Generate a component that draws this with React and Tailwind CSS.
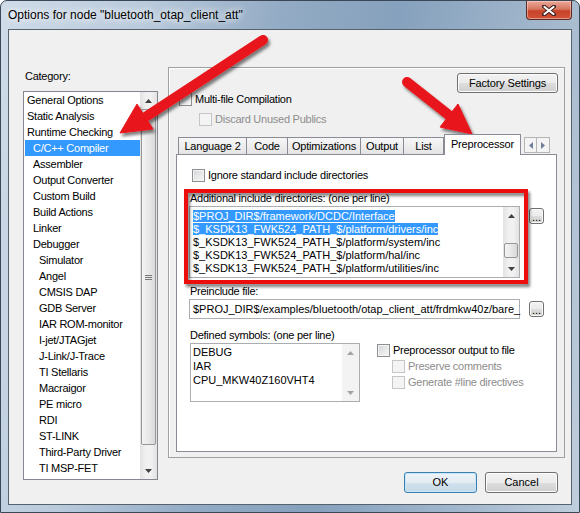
import React from "react";

const categories = [
  ["General Options", 0],
  ["Static Analysis", 0],
  ["Runtime Checking", 0],
  ["C/C++ Compiler", 1],
  ["Assembler", 1],
  ["Output Converter", 1],
  ["Custom Build", 1],
  ["Build Actions", 1],
  ["Linker", 1],
  ["Debugger", 1],
  ["Simulator", 2],
  ["Angel", 2],
  ["CMSIS DAP", 2],
  ["GDB Server", 2],
  ["IAR ROM-monitor", 2],
  ["I-jet/JTAGjet", 2],
  ["J-Link/J-Trace", 2],
  ["TI Stellaris", 2],
  ["Macraigor", 2],
  ["PE micro", 2],
  ["RDI", 2],
  ["ST-LINK", 2],
  ["Third-Party Driver", 2],
  ["TI MSP-FET", 2]
];

const indent = ["pl-[3px]", "pl-[9px]", "pl-[15px]"];

const tabs = [
  ["Language 2", "w-[69px]"],
  ["Code", "w-[42px]"],
  ["Optimizations", "w-[74px]"],
  ["Output", "w-[44px]"],
  ["List", "w-[41px]"]
];

const includes = [
  ["$PROJ_DIR$/framework/DCDC/Interface", true],
  ["$_KSDK13_FWK524_PATH_$/platform/drivers/inc", true],
  ["$_KSDK13_FWK524_PATH_$/platform/system/inc", false],
  ["$_KSDK13_FWK524_PATH_$/platform/hal/inc", false],
  ["$_KSDK13_FWK524_PATH_$/platform/utilities/inc", false]
];

const btn = "flex items-center justify-center rounded-[3px] border border-[#707070] bg-[linear-gradient(#f2f2f2_0%,#ebebeb_50%,#dddddd_51%,#cfcfcf_100%)] shadow-[inset_0_0_0_1px_#fcfcfc]";
const track = "bg-[linear-gradient(90deg,#e2e2e2,#f1f1f1_35%,#f1f1f1_65%,#e2e2e2)]";

function Arrow({ up, color = "#404040" }) {
  return (
    <svg width="7" height="4" viewBox="0 0 7 4">
      <path d={up ? "M0 4L3.5 0L7 4Z" : "M0 0L3.5 4L7 0Z"} fill={color} />
    </svg>
  );
}

function Check({ disabled }) {
  return (
    <span
      className={`block h-[13px] w-[13px] shrink-0 border ${
        disabled
          ? "border-[#c6c6c6] bg-[#f4f4f4]"
          : "border-[#8e8f8f] bg-[linear-gradient(135deg,#d3d6da,#f7f7f7)] shadow-[inset_0_0_0_1px_#f3f3f3]"
      }`}
    />
  );
}

function Thumb({ h, grip }) {
  return (
    <div className={`${h} mx-[1px] flex items-center justify-center rounded-[2px] border border-[#979797] bg-[linear-gradient(90deg,#f4f4f4,#e8e8e8_50%,#d9d9d9)]`}>
      {grip && (
        <div className="flex w-[7px] flex-col gap-[1px]">
          <span className="h-[1px] bg-[#777]" />
          <span className="h-[1px] bg-[#777]" />
          <span className="h-[1px] bg-[#777]" />
        </div>
      )}
    </div>
  );
}

function Dots() {
  return <div className={`${btn} ml-[9px] mt-[2px] h-[16px] w-[15px] !items-end pb-[2px] leading-[8px]`}>...</div>;
}

export default function App() {
  return (
    <div className="relative h-[513px] w-[580px] overflow-hidden font-['Liberation_Sans',Arial,sans-serif] text-[11px] text-black">
      <div className="flex h-full w-full flex-col rounded-t-[7px] border border-[#3b4756] bg-[linear-gradient(100deg,#cfdbe8_0%,#b9cadc_22%,#93abc4_42%,#86a1bd_60%,#a2b7cc_82%,#bfcedd_100%)] px-[7px]">
        {/* title bar */}
        <div className="flex h-[28px] items-start justify-between">
          <div className="pt-[7px] text-[12px] leading-[15px] [text-shadow:0_0_6px_#fff,0_0_10px_#fff]">
            Options for node "bluetooth_otap_client_att"
          </div>
          <div className="flex h-[19px] w-[46px] items-center justify-center rounded-b-[4px] border border-t-0 border-[#5d2b25] bg-[linear-gradient(#e9a99b_0%,#d7775f_45%,#c7432a_55%,#d0533a_100%)] shadow-[inset_0_0_0_1px_rgba(255,220,210,0.5)]">
            <svg width="14" height="11" viewBox="0 0 14 11">
              <path d="M2 1.5L12 9.5M12 1.5L2 9.5" stroke="#3a2220" strokeWidth="4" strokeLinecap="round" />
              <path d="M2.5 2L11.5 9M11.5 2L2.5 9" stroke="#ffffff" strokeWidth="2.2" strokeLinecap="round" />
            </svg>
          </div>
        </div>

        {/* client area */}
        <div className="flex h-[476px] w-[564px] border border-[#56636f] bg-[#f0f0f0] pl-[14px] pt-[37px]">
          {/* category column */}
          <div className="flex w-[135px] flex-col">
            <div className="h-[24px] pl-[2px] pt-[3px] leading-[13px] tracking-[-0.25px]">Category:</div>
            <div className="flex h-[389px] border border-[#828790] bg-white">
              <div className="flex-1">
                {categories.map(([name, lvl]) =>
                  name === "C/C++ Compiler" ? (
                    <div key={name} className="ml-[1px] h-[16px] bg-[#3399ff] pl-[8px] leading-[16px] tracking-[-0.25px] text-white">
                      {name}
                    </div>
                  ) : (
                    <div key={name} className={`h-[16px] leading-[16px] tracking-[-0.25px] ${indent[lvl]}`}>
                      {name}
                    </div>
                  )
                )}
              </div>
              <div className={`flex w-[17px] flex-col ${track}`}>
                <div className="flex h-[17px] items-center justify-center">
                  <Arrow up />
                </div>
                <Thumb h="h-[336px]" grip />
                <div className="h-[17px]" />
                <div className="flex h-[17px] items-center justify-center">
                  <Arrow />
                </div>
              </div>
            </div>
          </div>

          {/* right column: options panel + dialog buttons */}
          <div className="ml-[10px] flex w-[397px] flex-col">
            <div className="flex h-[391px] flex-col border border-[#a0a0a0] shadow-[inset_1px_1px_0_#fff]">
              <div className="flex justify-end pr-[6px] pt-[5px]">
                <div className={`${btn} h-[20px] w-[101px] tracking-[-0.15px]`}>Factory Settings</div>
              </div>
              <div className="flex h-[13px] items-center gap-[3px] pl-[10px]">
                <Check />
                <span className="tracking-[-0.25px]">Multi-file Compilation</span>
              </div>
              <div className="mt-[7px] flex h-[13px] items-center gap-[3px] pl-[30px] text-[#8d8d8d]">
                <Check disabled />
                <span className="tracking-[-0.25px]">Discard Unused Publics</span>
              </div>

              {/* tabs */}
              <div className="mt-[8px] flex h-[20px] items-end pl-[8px]">
                <div className="ml-[1px] flex">
                  {tabs.map(([t, w]) => (
                    <div key={t} className={`${w} mr-[-1px] flex h-[17px] items-center justify-center border border-b-0 border-[#898c95] bg-[linear-gradient(#f7f7f7,#e4e4e4)] leading-[13px] tracking-[-0.2px]`}>
                      {t}
                    </div>
                  ))}
                </div>
                <div className="relative z-10 -mb-[1px] ml-[1px] flex h-[21px] w-[77px] items-start justify-center border border-b-0 border-[#898c95] bg-white pt-[3px] leading-[13px] tracking-[-0.2px]">
                  Preprocessor
                </div>
                <div className="mb-[1px] ml-[3px] flex">
                  <div className="flex h-[16px] w-[13px] items-center justify-center border border-[#b5b5b5] bg-[#f4f4f4]">
                    <svg width="4" height="7" viewBox="0 0 4 7"><path d="M4 0L0 3.5L4 7Z" fill="#6e7d9a" /></svg>
                  </div>
                  <div className="flex h-[16px] w-[13px] items-center justify-center border border-l-0 border-[#b5b5b5] bg-[#f4f4f4]">
                    <svg width="4" height="7" viewBox="0 0 4 7"><path d="M0 0L4 3.5L0 7Z" fill="#6e7d9a" /></svg>
                  </div>
                </div>
              </div>

              {/* tab page */}
              <div className="mx-[7px] flex h-[298px] flex-col border border-[#898c95] bg-white">
                <div className="ml-[15px] mt-[14px] flex h-[13px] items-center gap-[3px]">
                  <Check />
                  <span className="tracking-[-0.25px]">Ignore standard include directories</span>
                </div>

                <div className="ml-[13px] mt-[10px] h-[13px] leading-[13px] tracking-[-0.25px]">
                  Additional include directories: (one per line)
                </div>
                <div className="ml-[12px] mt-[1px] flex items-start">
                  <div className="flex h-[72px] w-[331px] border border-[#abadb3] bg-white">
                    <div className="flex-1 overflow-hidden pl-[3px] pt-[3px]">
                      {includes.map(([line, sel]) => (
                        <div key={line} className="h-[13px] whitespace-nowrap leading-[13px]">
                          <span className={sel ? "bg-[#3399ff] text-white" : ""}>{line}</span>
                        </div>
                      ))}
                    </div>
                    <div className={`flex w-[16px] flex-col ${track}`}>
                      <div className="flex h-[17px] items-center justify-center">
                        <Arrow up />
                      </div>
                      <div className="h-[19px]" />
                      <Thumb h="h-[15px]" />
                      <div className="h-[2px]" />
                      <div className="flex h-[17px] items-center justify-center">
                        <Arrow />
                      </div>
                    </div>
                  </div>
                  <Dots />
                </div>

                <div className="ml-[13px] mt-[7px] h-[13px] leading-[13px] tracking-[-0.25px]">Preinclude file:</div>
                <div className="ml-[12px] mt-[1px] flex items-start">
                  <div className="h-[20px] w-[331px] whitespace-nowrap border border-[#abadb3] bg-white pl-[3px] leading-[18px]">
                    $PROJ_DIR$/examples/bluetooth/otap_client_att/frdmkw40z/bare_
                  </div>
                  <Dots />
                </div>

                <div className="ml-[13px] mt-[10px] h-[13px] leading-[13px] tracking-[-0.25px]">Defined symbols: (one per line)</div>
                <div className="ml-[13px] mt-[1px] flex items-start">
                  <div className="flex h-[59px] w-[170px] border border-[#abadb3] bg-white">
                    <div className="flex-1 pl-[2px] pt-[1px]">
                      <div className="h-[14px] leading-[14px]">DEBUG</div>
                      <div className="h-[14px] leading-[14px]">IAR</div>
                      <div className="h-[14px] leading-[14px]">CPU_MKW40Z160VHT4</div>
                    </div>
                    <div className="flex w-[17px] flex-col bg-[#f3f3f3]">
                      <div className="flex h-[17px] items-center justify-center">
                        <Arrow up color="#a3a3a3" />
                      </div>
                      <div className="flex-1" />
                      <div className="flex h-[17px] items-center justify-center">
                        <Arrow color="#a3a3a3" />
                      </div>
                    </div>
                  </div>
                  <div className="ml-[17px] mt-[1px] flex flex-col gap-[3px]">
                    <div className="flex h-[13px] items-center gap-[3px]">
                      <Check />
                      <span className="tracking-[-0.25px]">Preprocessor output to file</span>
                    </div>
                    <div className="ml-[15px] flex h-[13px] items-center gap-[3px] text-[#8d8d8d]">
                      <Check disabled />
                      <span className="tracking-[-0.25px]">Preserve comments</span>
                    </div>
                    <div className="ml-[15px] flex h-[13px] items-center gap-[3px] text-[#8d8d8d]">
                      <Check disabled />
                      <span className="tracking-[-0.25px]">Generate #line directives</span>
                    </div>
                  </div>
                </div>
              </div>
            </div>

            {/* bottom buttons */}
            <div className="mr-[7px] mt-[14px] flex justify-end gap-[8px]">
              <div className="flex h-[21px] w-[73px] items-center justify-center rounded-[3px] border border-[#3c7fb1] bg-[linear-gradient(#eef4f8_0%,#e3ecf3_50%,#d2e1ec_51%,#c6d9e8_100%)] shadow-[inset_0_0_0_1px_#c6e6fb]">
                OK
              </div>
              <div className={`${btn} h-[21px] w-[73px]`}>Cancel</div>
            </div>
          </div>
        </div>
      </div>

      {/* annotations drawn over the dialog */}
      <svg className="pointer-events-none absolute left-0 top-0" width="580" height="513" viewBox="0 0 580 513">
        <defs>
          <filter id="sh" x="-30%" y="-30%" width="160%" height="160%">
            <feDropShadow dx="2" dy="3" stdDeviation="1.8" floodColor="#000" floodOpacity="0.5" />
          </filter>
        </defs>
        <rect x="186" y="191" width="340" height="91" fill="none" stroke="#ec1010" strokeWidth="4" filter="url(#sh)" />
        <g filter="url(#sh)" fill="#e8151b" stroke="#e8151b">
          <line x1="263" y1="40" x2="147" y2="116" strokeWidth="10" strokeLinecap="round" />
          <polygon points="120,133 153,129 137,104" strokeWidth="1" strokeLinejoin="round" />
        </g>
        <g filter="url(#sh)" fill="#e8151b" stroke="#e8151b">
          <line x1="407" y1="82" x2="450" y2="116" strokeWidth="10" strokeLinecap="round" />
          <polygon points="472,134 440,127 458,104" strokeWidth="1" strokeLinejoin="round" />
        </g>
      </svg>
    </div>
  );
}
